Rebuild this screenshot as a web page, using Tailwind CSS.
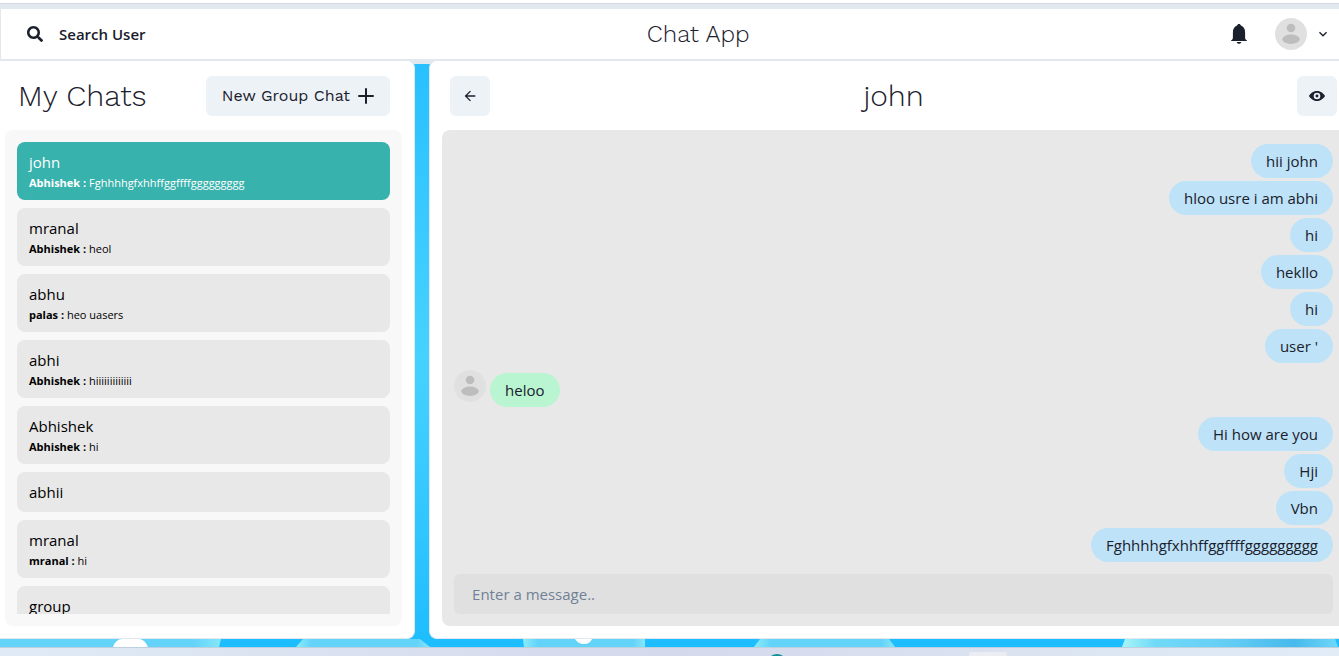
<!DOCTYPE html>
<html lang="en">
<head>
<meta charset="utf-8">
<title>Chat App</title>
<script src="https://cdn.jsdelivr.net/npm/@tailwindcss/browser@4"></script>
</head>
<body class="h-screen flex flex-col overflow-hidden bg-white font-['Open_Sans','Noto_Sans',sans-serif] text-[15px] leading-6 text-[#1a202c]">
<div class="h-1 shrink-0 border-b border-[#d5d9e0] bg-white"></div>
<header class="shrink-0 flex justify-between items-center border-y-5 border-l border-[#e2e8f0] bg-white h-15 pl-[10px] pr-2">
  <button type="button" class="flex items-center gap-4 h-10 px-4 text-[15px] font-semibold">
    <svg class="size-4" viewBox="0 0 512 512" fill="currentColor" aria-hidden="true"><path d="M505 442.700L405.300 343c-4.500-4.500-10.600-7-17-7H372c27.600-35.300 44-79.700 44-128C416 93.100 322.900 0 208 0S0 93.100 0 208s93.100 208 208 208c48.300 0 92.700-16.400 128-44v16.300c0 6.400 2.500 12.500 7 17l99.700 99.700c9.400 9.400 24.600 9.400 33.900 0l28.300-28.300c9.400-9.400 9.400-24.600.1-34zM208 336c-70.700 0-128-57.200-128-128 0-70.700 57.200-128 128-128 70.700 0 128 57.200 128 128 0 70.700-57.200 128-128 128z"/></svg>
    Search User
  </button>
  <h1 class="pl-3 font-['Work_Sans','Inter',sans-serif] text-[24px] font-light">Chat App</h1>
  <div class="flex items-center">
    <button type="button" aria-label="Notifications" class="p-1 mr-5">
      <svg class="size-6" viewBox="0 0 24 24" fill="currentColor" aria-hidden="true"><path d="M20 18.500c-1.300-.6-1.900-1.600-1.900-3V10.300c0-3.400-1.600-5.900-4.200-6.700C13.700 2.600 13 2 12 2s-1.700.6-1.900 1.600c-2.600.8-4.200 3.300-4.200 6.700v5.200c0 1.400-.6 2.400-1.900 3v.5h16zM9.700 20h4.600c-.2 1.200-1.100 1.800-2.300 1.800s-2.100-.6-2.300-1.800z"/></svg>
    </button>
    <button type="button" aria-label="Account menu" class="flex items-center gap-2">
      <svg class="size-8" viewBox="0 0 32 32" aria-hidden="true"><circle cx="16" cy="16" r="16" fill="#e0e0e0"/><circle cx="16" cy="10" r="4.300" fill="#bdbdbd"/><ellipse cx="16" cy="21.300" rx="8.700" ry="4.700" fill="#bdbdbd"/></svg>
      <svg class="size-4" viewBox="0 0 24 24" fill="currentColor" aria-hidden="true"><path d="M16.590 8.590L12 13.170 7.410 8.590 6 10l6 6 6-6z"/></svg>
    </button>
  </div>
</header>
<div class="relative flex-1 min-h-0 flex flex-col bg-linear-to-b from-[#28c0ff] via-[#46d2ff] to-[#1cbdff]">
  <main class="flex-1 min-h-0 flex gap-[14px] -mt-1">
    <section class="w-[31%] shrink-0 flex flex-col rounded-r-lg border border-l-0 border-[#e2e8f0] bg-white pl-[5px] pr-3 pt-[15px] pb-3">
      <div class="flex items-center justify-between pl-[13px] pr-3 pb-[14px] font-['Work_Sans','Inter',sans-serif]">
        <h2 class="text-[30px] font-light">My Chats</h2>
        <button type="button" class="flex items-center gap-2 h-10 px-4 rounded-md bg-[#edf2f7] text-[16px] whitespace-nowrap">New Group Chat
          <svg class="size-4" viewBox="0 0 16 16" fill="none" stroke="currentColor" stroke-width="2" stroke-linecap="round" aria-hidden="true"><path d="M8 1v14M1 8h14"/></svg>
        </button>
      </div>
      <div class="flex-1 min-h-0 rounded-lg bg-[#f8f8f8] p-3 flex">
        <ul class="flex-1 flex flex-col gap-2 overflow-hidden text-black">
          <li class="shrink-0 rounded-lg bg-[#38b2ac] text-white px-3 py-2"><p>john</p><p class="text-[11px] leading-[18px]"><b>Abhishek : </b>Fghhhhgfxhhffggffffggggggggg</p></li>
          <li class="shrink-0 rounded-lg bg-[#e8e8e8] px-3 py-2"><p>mranal</p><p class="text-[11px] leading-[18px]"><b>Abhishek : </b>heol</p></li>
          <li class="shrink-0 rounded-lg bg-[#e8e8e8] px-3 py-2"><p>abhu</p><p class="text-[11px] leading-[18px]"><b>palas : </b>heo uasers</p></li>
          <li class="shrink-0 rounded-lg bg-[#e8e8e8] px-3 py-2"><p>abhi</p><p class="text-[11px] leading-[18px]"><b>Abhishek : </b>hiiiiiiiiiiiii</p></li>
          <li class="shrink-0 rounded-lg bg-[#e8e8e8] px-3 py-2"><p>Abhishek</p><p class="text-[11px] leading-[18px]"><b>Abhishek : </b>hi</p></li>
          <li class="shrink-0 rounded-lg bg-[#e8e8e8] px-3 py-2"><p>abhii</p></li>
          <li class="shrink-0 rounded-lg bg-[#e8e8e8] px-3 py-2"><p>mranal</p><p class="text-[11px] leading-[18px]"><b>mranal : </b>hi</p></li>
          <li class="shrink-0 rounded-lg bg-[#e8e8e8] px-3 py-2"><p>group</p></li>
        </ul>
      </div>
    </section>
    <section class="flex-1 min-w-0 flex flex-col rounded-l-lg border border-r-0 border-[#e2e8f0] bg-white pl-3 pt-[15px] pb-3">
      <div class="flex items-center justify-between pl-2 pr-[2px] pb-[14px]">
        <button type="button" aria-label="Back" class="flex size-10 items-center justify-center rounded-md bg-[#edf2f7]">
          <svg class="size-4" viewBox="0 0 24 24" fill="currentColor" aria-hidden="true"><path d="M20 11H7.830l5.590-5.590L12 4l-8 8 8 8 1.410-1.410L7.830 13H20v-2z"/></svg>
        </button>
        <h2 class="font-['Work_Sans','Inter',sans-serif] text-[30px] font-light">john</h2>
        <button type="button" aria-label="View profile" class="flex size-10 items-center justify-center rounded-md bg-[#edf2f7]">
          <svg class="size-4" viewBox="0 0 24 24" fill="currentColor" fill-rule="evenodd" aria-hidden="true"><path d="M12 4.500C6 4.500 2 8.500 0 12c2 3.500 6 7.500 12 7.500s10-4 12-7.500c-2-3.500-6-7.500-12-7.500zM12 7a5 5 0 1 1 0 10 5 5 0 0 1 0-10z"/><circle cx="12" cy="12" r="2.200"/></svg>
        </button>
      </div>
      <div class="flex-1 min-h-0 flex flex-col justify-end rounded-l-lg bg-[#e8e8e8] pl-3 pr-[6px] pb-3">
        <div class="flex flex-col items-end gap-[3px]">
          <p class="rounded-full bg-[#bee3f8] px-[15px] py-[5px]">hii john</p>
          <p class="rounded-full bg-[#bee3f8] px-[15px] py-[5px]">hloo usre i am abhi</p>
          <p class="rounded-full bg-[#bee3f8] px-[15px] py-[5px]">hi</p>
          <p class="rounded-full bg-[#bee3f8] px-[15px] py-[5px]">hekllo</p>
          <p class="rounded-full bg-[#bee3f8] px-[15px] py-[5px]">hi</p>
          <p class="rounded-full bg-[#bee3f8] px-[15px] py-[5px]">user '</p>
          <div class="self-start flex items-start gap-1 py-1">
            <svg class="size-8" viewBox="0 0 32 32" role="img" aria-label="john"><circle cx="16" cy="16" r="16" fill="#e0e0e0"/><circle cx="16" cy="10" r="4.300" fill="#bdbdbd"/><ellipse cx="16" cy="21.300" rx="8.700" ry="4.700" fill="#bdbdbd"/></svg>
            <p class="mt-[3px] rounded-full bg-[#b9f5d0] px-[15px] py-[5px]">heloo</p>
          </div>
          <p class="mt-[3px] rounded-full bg-[#bee3f8] px-[15px] py-[5px]">Hi how are you</p>
          <p class="rounded-full bg-[#bee3f8] px-[15px] py-[5px]">Hji</p>
          <p class="rounded-full bg-[#bee3f8] px-[15px] py-[5px]">Vbn</p>
          <p class="rounded-full bg-[#bee3f8] px-[15px] py-[5px]">Fghhhhgfxhhffggffffggggggggg</p>
        </div>
        <input type="text" aria-label="Message" placeholder="Enter a message.." class="mt-3 h-10 w-full shrink-0 rounded-md bg-[#e0e0e0] px-[18px] placeholder:text-[#718096]">
      </div>
    </section>
  </main>
  <svg class="h-2 w-full shrink-0" viewBox="0 0 1339 8" preserveAspectRatio="none" aria-hidden="true">
    <defs>
      <linearGradient id="bubble"><stop offset="0" stop-color="#8cecfb"/><stop offset=".12" stop-color="#63d3f9"/><stop offset=".9" stop-color="#63d3f9"/><stop offset="1" stop-color="#86e6fb"/></linearGradient>
      <linearGradient id="edge"><stop offset="0" stop-color="#a8f6f8"/><stop offset=".15" stop-color="#72daf8"/><stop offset=".5" stop-color="#63cdf5"/><stop offset=".8" stop-color="#47b9ec"/><stop offset="1" stop-color="#70d8fa"/></linearGradient>
    </defs>
    <path fill="url(#bubble)" d="M-60 0H221L219 8H-60z"/>
    <path fill="url(#bubble)" d="M303 0H420L430 8H296z"/>
    <path fill="url(#bubble)" d="M523 0H645V8H524z"/>
    <path fill="url(#bubble)" d="M760 0H889L895 8H754z"/>
    <path fill="url(#edge)" d="M1125 0H1335L1338 8H1122z"/>
    <path fill="#fff" d="M113 8Q116 0 122 0H140Q145 1 148 8z"/>
    <path fill="#fff" d="M575 0H592Q590 5 584 5Q578 5 575 0z"/>
  </svg>
</div>
<footer class="h-[9px] shrink-0 border-t border-[#bcd0e0] bg-linear-to-r from-[#e0eaf6] via-[#d4d9eb] via-50% to-[#e1ecf7]">
  <svg class="h-2 w-full" viewBox="0 0 1339 8" preserveAspectRatio="none" aria-hidden="true"><ellipse cx="777" cy="12" rx="8" ry="6" fill="#138f96"/><path fill="#ececf3" d="M969 8V6Q969 4 972 4H1004Q1007 4 1007 6V8z"/></svg>
</footer>
</body>
</html>
